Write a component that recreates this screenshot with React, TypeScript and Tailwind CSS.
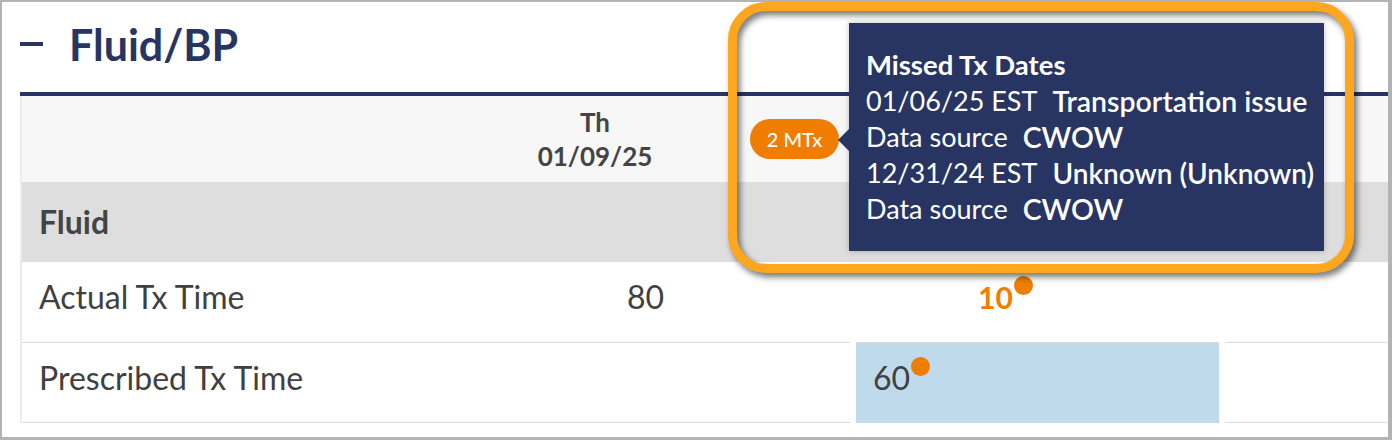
import React from "react";

function Dot() {
  return <span className="inline-block w-[19px] h-[19px] rounded-full bg-[#ef7d00] ml-[1px] self-start" />;
}

export default function App() {
  return (
    <div
      className="relative w-[1392px] h-[440px] overflow-hidden bg-white border-t-2 border-l-2 border-r-4 border-b-[3px] border-[#b3b3b3] text-[#404040]"
      style={{ fontFamily: "Lato, 'Open Sans', sans-serif" }}
    >
      <div className="pl-[18px]">
        {/* Title row */}
        <div className="h-[90px] pt-[21px] flex items-start">
          <div className="w-[23px] h-[4px] bg-[#283562] mt-[19px]" />
          <h1 className="ml-[26px] text-[43px] leading-[44px] font-bold text-[#283562]">Fluid/BP</h1>
        </div>

        {/* Table */}
        <div className="border-t-4 border-[#283562]">
          <div className="border-l-2 border-[#ececec]">
            {/* Header row */}
            <div className="flex h-[86px] bg-[#f7f7f7]">
              <div className="w-[506px]" />
              <div className="w-[322px] flex items-center">
                <div className="w-[134px] text-center text-[26px] leading-[34px] font-bold text-[#444444]">
                  <div>Th</div>
                  <div>01/09/25</div>
                </div>
                <div className="ml-auto mr-[11px] h-[40px] w-[89px] rounded-full bg-[#ef7d00] text-white text-[20px] font-medium flex items-center justify-center">
                  2 MTx
                </div>
              </div>
              <div className="w-[363px] ml-[6px]" />
              <div className="w-[163px] ml-[6px]" />
            </div>

            {/* Group row */}
            <div className="h-[80px] bg-[#dedede] flex items-center pl-[17px]">
              <span className="text-[32px] font-bold text-[#444444]">Fluid</span>
            </div>

            {/* Actual Tx Time */}
            <div className="flex h-[81px]">
              <div className="w-[506px] border-b border-[#dcdcdc] flex items-center pl-[17px] pb-[10px] text-[32px]">
                Actual Tx Time
              </div>
              <div className="w-[322px] border-b border-[#dcdcdc] flex items-center pb-[10px]">
                <div className="w-[136px] text-right text-[32px]">80</div>
              </div>
              <div className="w-[363px] ml-[6px] border-b border-[#dcdcdc] flex items-center pl-[122px] pb-[10px]">
                <span className="flex items-start">
                  <span className="text-[30px] font-bold text-[#ef7d00] leading-[42px]">10</span>
                  <Dot />
                </span>
              </div>
              <div className="w-[163px] ml-[6px] border-b border-[#dcdcdc]" />
            </div>

            {/* Prescribed Tx Time */}
            <div className="flex h-[80px]">
              <div className="w-[506px] border-b border-[#dcdcdc] flex items-center pl-[17px] pb-[10px] text-[32px]">
                Prescribed Tx Time
              </div>
              <div className="w-[322px] border-b border-[#dcdcdc]" />
              <div className="w-[363px] ml-[6px] bg-[#bfdaeb] flex items-center pl-[17px] pb-[10px]">
                <span className="flex items-start">
                  <span className="text-[32px] leading-[42px]">60</span>
                  <Dot />
                </span>
              </div>
              <div className="w-[163px] ml-[6px] border-b border-[#dcdcdc]" />
            </div>
          </div>
        </div>
      </div>

      {/* Tooltip */}
      <div className="absolute left-[847px] top-[21px] w-[475px] h-[228px] bg-[#283562] shadow-[0_0_6px_rgba(0,0,0,0.25)] pl-[17px] pt-[24px] text-white text-[27px] leading-[36px]">
        <div className="absolute left-[-11px] top-[106px] w-0 h-0 border-y-[11px] border-y-transparent border-r-[11px] border-r-[#283562]" />
        <div className="font-bold text-[27.5px]">Missed Tx Dates</div>
        <div className="flex gap-[15px]">
          <span>01/06/25 EST</span>
          <span className="font-semibold text-[28.5px]">Transportation issue</span>
        </div>
        <div className="flex gap-[15px]">
          <span>Data source</span>
          <span className="font-semibold text-[28.5px]">CWOW</span>
        </div>
        <div className="flex gap-[15px]">
          <span>12/31/24 EST</span>
          <span className="font-semibold text-[28px]">Unknown (Unknown)</span>
        </div>
        <div className="flex gap-[15px]">
          <span>Data source</span>
          <span className="font-semibold text-[28.5px]">CWOW</span>
        </div>
      </div>

      {/* Highlight annotation */}
      <div className="absolute left-[726px] top-0 w-[626px] h-[271px] rounded-[38px] border-[9px] border-[#ffa61f] [filter:drop-shadow(3px_4px_3px_rgba(0,0,0,0.55))]" />
    </div>
  );
}
